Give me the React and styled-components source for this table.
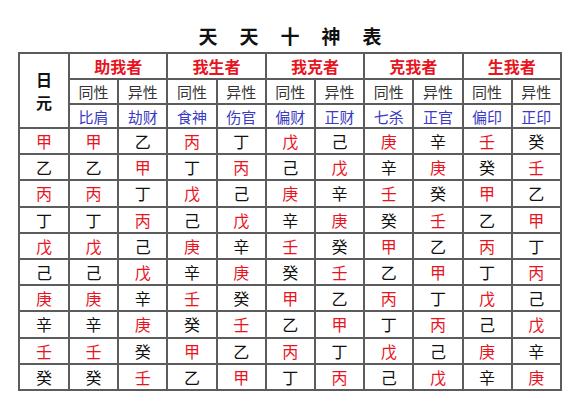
import React from "react";
import styled, { createGlobalStyle } from "styled-components";

const GlobalStyle = createGlobalStyle`
  html, body {
    margin: 0;
    padding: 0;
    background: #ffffff;
  }
  body {
    font-family: "Noto Sans CJK SC", "Noto Sans", sans-serif;
  }
`;

const YANG = new Set(["甲", "丙", "戊", "庚", "壬"]);

const GROUPS = ["助我者", "我生者", "我克者", "克我者", "生我者"];
const GODS = ["比肩", "劫财", "食神", "伤官", "偏财", "正财", "七杀", "正官", "偏印", "正印"];

// each row: 日元 followed by 比肩 ... 正印
const ROWS = [
  ["甲", "甲", "乙", "丙", "丁", "戊", "己", "庚", "辛", "壬", "癸"],
  ["乙", "乙", "甲", "丁", "丙", "己", "戊", "辛", "庚", "癸", "壬"],
  ["丙", "丙", "丁", "戊", "己", "庚", "辛", "壬", "癸", "甲", "乙"],
  ["丁", "丁", "丙", "己", "戊", "辛", "庚", "癸", "壬", "乙", "甲"],
  ["戊", "戊", "己", "庚", "辛", "壬", "癸", "甲", "乙", "丙", "丁"],
  ["己", "己", "戊", "辛", "庚", "癸", "壬", "乙", "甲", "丁", "丙"],
  ["庚", "庚", "辛", "壬", "癸", "甲", "乙", "丙", "丁", "戊", "己"],
  ["辛", "辛", "庚", "癸", "壬", "乙", "甲", "丁", "丙", "己", "戊"],
  ["壬", "壬", "癸", "甲", "乙", "丙", "丁", "戊", "己", "庚", "辛"],
  ["癸", "癸", "壬", "乙", "甲", "丁", "丙", "己", "戊", "辛", "庚"],
];

const Page = styled.div`
  width: 580px;
  height: 414px;
  display: flex;
  flex-direction: column;
  align-items: center;
  padding-top: 25px;
  box-sizing: border-box;
`;

const Title = styled.h1`
  margin: 0 -22px 5px 0;
  height: 22px;
  line-height: 22px;
  font-size: 19px;
  font-weight: 700;
  letter-spacing: 22px;
  color: #111;
`;

const Table = styled.table`
  border-collapse: collapse;
  table-layout: fixed;
  width: 544px;
  border: 2px solid #555;
`;

const Cell = styled.td`
  border: 2px solid #5c5c5c;
  padding: 0;
  text-align: center;
  vertical-align: middle;
  font-size: ${(p) => p.$size || 16}px;
  line-height: 1;
  height: ${(p) => p.$h || 24}px;
  color: ${(p) =>
    p.$tone === "red" ? "#e8141e" : p.$tone === "blue" ? "#3a3ac4" : p.$tone === "gray" ? "#333" : "#111"};
  font-weight: ${(p) => (p.$bold ? 700 : 400)};
`;

const DayHead = styled(Cell)`
  font-weight: 700;
`;

const DayChar = styled.span`
  display: block;
  line-height: 23px;
`;

export default function App() {
  return (
    <>
      <GlobalStyle />
      <Page>
        <Title>天天十神表</Title>
        <Table>
          <colgroup>
            <col style={{ width: 50 }} />
            {GODS.map((g) => (
              <col key={g} />
            ))}
          </colgroup>
          <tbody>
            <tr>
              <DayHead as="th" rowSpan={3} $size={16}>
                <DayChar>日</DayChar>
                <DayChar>元</DayChar>
              </DayHead>
              {GROUPS.map((g) => (
                <Cell as="th" key={g} colSpan={2} $tone="red" $bold $size={16} $h={24}>
                  {g}
                </Cell>
              ))}
            </tr>
            <tr>
              {GROUPS.map((g) => (
                <React.Fragment key={g}>
                  <Cell $tone="gray" $size={15} $h={23}>同性</Cell>
                  <Cell $tone="gray" $size={15} $h={23}>异性</Cell>
                </React.Fragment>
              ))}
            </tr>
            <tr>
              {GODS.map((g) => (
                <Cell key={g} $tone="blue" $size={15} $h={22}>
                  {g}
                </Cell>
              ))}
            </tr>
            {ROWS.map((row) => (
              <tr key={row[0]}>
                {row.map((s, i) => (
                  <Cell key={i} $tone={YANG.has(s) ? "red" : "black"} $size={16} $h={24.2}>
                    {s}
                  </Cell>
                ))}
              </tr>
            ))}
          </tbody>
        </Table>
      </Page>
    </>
  );
}
